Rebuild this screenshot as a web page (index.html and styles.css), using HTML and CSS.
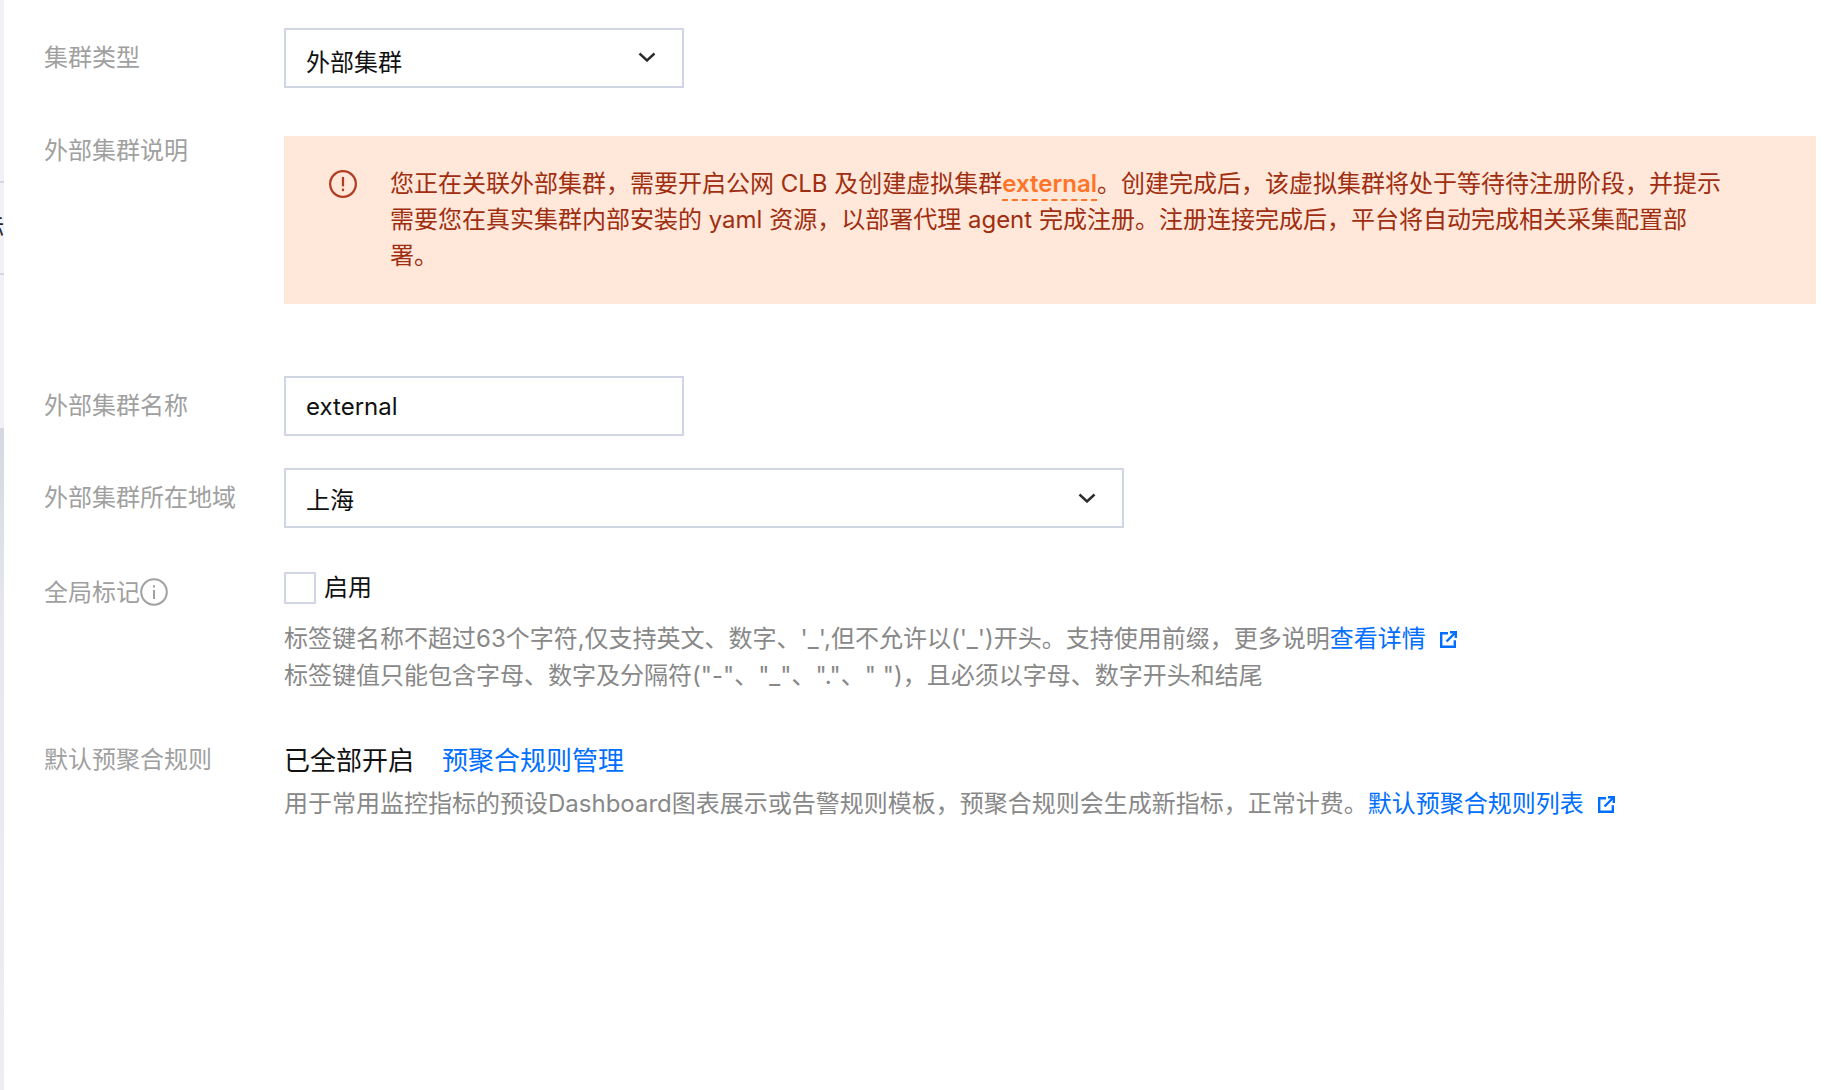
FILE: index.html
```html
<!DOCTYPE html>
<html lang="zh-CN">
<head>
<meta charset="utf-8">
<title>关联集群</title>
<link rel="stylesheet" href="styles.css">
</head>
<body>
<div class="page">
  <aside class="strip">
    <div class="strip-top"><div class="strip-item"><span class="strip-text">标</span></div></div>
    <div class="strip-bottom"></div>
  </aside>
  <main class="form">
    <div class="row row-type">
      <div class="label label-control">集群类型</div>
      <div class="control select select-short"><span class="select-value">外部集群</span>
        <svg class="chevron" viewBox="0 0 18 10"><path d="M1.5 1.5 9 8.5l7.5-7"/></svg>
      </div>
    </div>
    <div class="row row-alert">
      <div class="label label-alert">外部集群说明</div>
      <div class="alert">
        <svg class="alert-icon" viewBox="0 0 32 32"><circle cx="16" cy="16" r="13.7"/><path d="M16 8.5v10"/><path d="M16 21v2.6"/></svg>
        <p class="alert-text">您正在关联外部集群，需要开启公网 CLB 及创建虚拟集群<span class="alert-name">external</span>。创建完成后，该虚拟集群将处于等待待注册阶段，并提示需要您在真实集群内部安装的 yaml 资源，以部署代理 agent 完成注册。注册连接完成后，平台将自动完成相关采集配置部署。</p>
      </div>
    </div>
    <div class="row row-name">
      <div class="label label-control">外部集群名称</div>
      <div class="control input">external</div>
    </div>
    <div class="row row-region">
      <div class="label label-control">外部集群所在地域</div>
      <div class="control select select-long"><span>上海</span>
        <svg class="chevron" viewBox="0 0 18 10"><path d="M1.5 1.5 9 8.5l7.5-7"/></svg>
      </div>
    </div>
    <div class="row row-global">
      <div class="label label-global">全局标记<svg class="info-icon" viewBox="0 0 28 28"><circle cx="14" cy="14" r="12.8"/><path d="M14 12v9"/><path d="M14 7.2v2.2"/></svg></div>
      <div>
        <label class="check"><span class="check-box"></span><span>启用</span></label>
        <p class="help help-first">标签键名称不超过63个字符,仅支持英文、数字、'_',但不允许以('_')开头。支持使用前缀，更多说明<a class="link">查看详情<svg class="ext-icon" viewBox="0 0 17 17"><path d="M8 2.2H1.2v13.6h13.6V9.2"/><path d="M6.5 10.5 15 2"/><path d="M10 1.2h5.8V7"/></svg></a></p>
        <p class="help">标签键值只能包含字母、数字及分隔符("-"、"_"、"."、" ")，且必须以字母、数字开头和结尾</p>
      </div>
    </div>
    <div class="row row-rules">
      <div class="label label-rules">默认预聚合规则</div>
      <div>
        <div class="rules-line"><span class="rules-state">已全部开启</span><a class="rules-link">预聚合规则管理</a></div>
        <p class="help help-rules">用于常用监控指标的预设Dashboard图表展示或告警规则模板，预聚合规则会生成新指标，正常计费。<a class="link">默认预聚合规则列表<svg class="ext-icon" viewBox="0 0 17 17"><path d="M8 2.2H1.2v13.6h13.6V9.2"/><path d="M6.5 10.5 15 2"/><path d="M10 1.2h5.8V7"/></svg></a></p>
      </div>
    </div>
  </main>
</div>
</body>
</html>
```
FILE: styles.css
```css
* { box-sizing: border-box; }
html, body { margin: 0; height: 100%; background: #fff; }
body {
  font-family: "Inter", "Noto Sans CJK SC", sans-serif;
  font-size: 24px;
  color: #111;
  overflow: hidden;
}
p { margin: 0; }

.page { display: flex; height: 1090px; }

.strip {
  width: 4px;
  flex: none;
  display: flex;
  flex-direction: column;
  overflow: hidden;
}
.strip-top { height: 428px; background: #f1f2f5; }
.strip-item {
  margin-top: 181px;
  height: 94px;
  border-top: 2px solid #d4d8e3;
  border-bottom: 2px solid #d4d8e3;
  display: flex;
  align-items: center;
  justify-content: flex-end;
  overflow: hidden;
}
.strip-text { flex: none; line-height: 30px; color: #222; font-size: 24px; }
.strip-bottom {
  flex: 1;
  background: linear-gradient(180deg, #d5d8e0 0, #e6e8ee 200px, #eceef2 100%);
}

.form { flex: 1; padding: 28px 22px 0 40px; }
.row { display: grid; grid-template-columns: 240px 1fr; }
.row-alert { margin-top: 48px; }
.row-name { margin-top: 72px; }
.row-region { margin-top: 32px; }
.row-global { margin-top: 44px; }
.row-rules { margin-top: 46px; }

.label { color: #a0a0a0; white-space: nowrap; }
.label-control { line-height: 60px; }
.label-control { position: static; }
.row-type .label-control { line-height: 60px; }
.label-alert { line-height: 30px; }
.label-global { display: flex; align-items: center; height: 36px; }
.label-rules { line-height: 36px; padding-top: 2px; }

.control {
  height: 60px;
  border: 2px solid #d0d6e4;
  padding: 0 20px;
  display: flex;
  align-items: center;
  justify-content: space-between;
  color: #111;
  background: #fff;
}
.input { width: 400px; }
.select-short { width: 400px; }
.select-long { width: 840px; }
.select-value { padding-top: 5px; }
.chevron { width: 18px; height: 10px; fill: none; stroke: #2b2b2b; stroke-width: 2.4; margin-right: 6px; flex: none; }
.select-short .chevron { margin-top: -3px; }

.alert {
  height: 168px;
  background: #ffe7d9;
  padding: 30px 84px 0 44px;
  display: flex;
  gap: 32px;
  align-items: flex-start;
}
.alert-icon { width: 30px; height: 30px; flex: none; margin-top: 3px; fill: none; stroke: #b23d22; stroke-width: 2.4; }
.alert-text { color: #a02e10; line-height: 36px; flex: 1; }
.alert-name {
  color: #ff7427;
  font-weight: 600;
  border-bottom: 2px dashed #ff7427;
  padding-bottom: 1px;
}

.info-icon { width: 28px; height: 28px; fill: none; stroke: #a0a0a0; stroke-width: 2; margin-top: 3px; }

.check { display: flex; align-items: center; gap: 8px; height: 32px; color: #111; line-height: 32px; }
.check-box { width: 32px; height: 32px; border: 2px solid #d0d6e4; background: #fff; flex: none; }

.help { color: #888; line-height: 37px; white-space: nowrap; }
.help-first { margin-top: 16px; }
.help-rules { margin-top: 9px; }
.link { color: #006eff; }
.ext-icon { width: 17px; height: 17px; fill: none; stroke: #006eff; stroke-width: 2.4; margin-left: 14px; vertical-align: -1px; }

.rules-line { display: flex; gap: 28px; align-items: center; height: 36px; font-size: 26px; }
.rules-state { color: #111; }
.rules-link { color: #006eff; }
```
